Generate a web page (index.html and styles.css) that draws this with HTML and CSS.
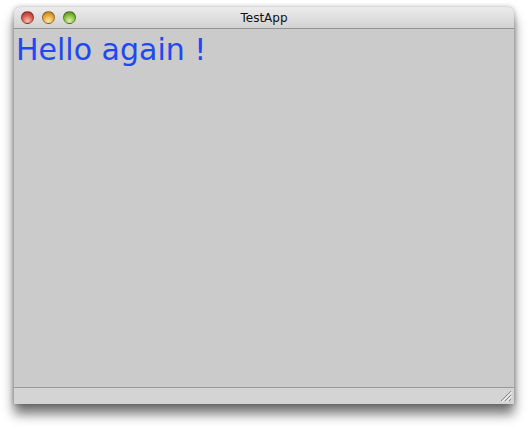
FILE: index.html
```html
<!DOCTYPE html>
<html lang="en">
<head>
  <meta charset="UTF-8" />
  <title>TestApp</title>
  <link rel="stylesheet" href="styles.css">
</head>
<body>
  <div class="window">
    <div class="titlebar">
      <div class="lights">
        <span class="light red"></span>
        <span class="light yellow"></span>
        <span class="light green"></span>
      </div>
      <span class="title">TestApp</span>
    </div>
    <div class="content">
      <h1 class="hello">Hello again !</h1>
    </div>
    <div class="statusbar">
      <svg class="grip" width="12" height="12" viewBox="0 0 12 12">
        <g stroke="#8a8a8a" stroke-width="1">
          <line x1="11" y1="1" x2="1" y2="11" />
          <line x1="11" y1="5" x2="5" y2="11" />
          <line x1="11" y1="9" x2="9" y2="11" />
        </g>
        <g stroke="#f4f4f4" stroke-width="1">
          <line x1="12" y1="2" x2="2" y2="12" />
          <line x1="12" y1="6" x2="6" y2="12" />
        </g>
      </svg>
    </div>
  </div>
</body>
</html>
```
FILE: styles.css
```css
* {
  margin: 0;
  padding: 0;
  box-sizing: border-box;
}

html, body {
  height: 100%;
}

body {
  background: #fff;
  font-family: 'DejaVu Sans', Verdana, sans-serif;
  padding: 7px 0 0 14px;
}

.window {
  width: 500px;
  height: 397px;
  display: flex;
  flex-direction: column;
  border-radius: 6px 6px 0 0;
  box-shadow: 0 10px 12px rgba(0, 0, 0, 0.55), 0 0 5px rgba(0, 0, 0, 0.3);
  background: #cbcbcb;
}

.titlebar {
  position: relative;
  height: 22px;
  display: flex;
  align-items: center;
  justify-content: center;
  background: linear-gradient(#ececec, #d2d2d2);
  border-bottom: 1px solid #959595;
  border-radius: 6px 6px 0 0;
}

.lights {
  position: absolute;
  left: 7px;
  top: 4px;
  display: flex;
  gap: 8px;
}

.light {
  width: 13px;
  height: 13px;
  border-radius: 50%;
  border: 1px solid rgba(0, 0, 0, 0.35);
}

.red {
  background: radial-gradient(circle at 50% 80%, #f8c0b4 0%, #d8574b 55%, #9d2a22 100%);
}

.yellow {
  background: radial-gradient(circle at 50% 80%, #fde9a8 0%, #e8a533 55%, #a8701a 100%);
}

.green {
  background: radial-gradient(circle at 50% 80%, #dcf4a8 0%, #82bd3b 55%, #4b7d1c 100%);
}

.title {
  font-family: 'DejaVu Sans', sans-serif;
  font-size: 12px;
  color: #111;
}

.content {
  flex: 1;
  background: #cbcbcb;
  padding: 3px 2px;
}

.hello {
  font-family: 'DejaVu Sans', Verdana, sans-serif;
  font-weight: normal;
  font-size: 30px;
  color: #2048f0;
  line-height: 36px;
}

.statusbar {
  height: 17px;
  background: #d4d4d4;
  border-top: 1px solid #9a9a9a;
  display: flex;
  justify-content: flex-end;
  align-items: flex-end;
  padding: 0 2px 2px 0;
}
```
